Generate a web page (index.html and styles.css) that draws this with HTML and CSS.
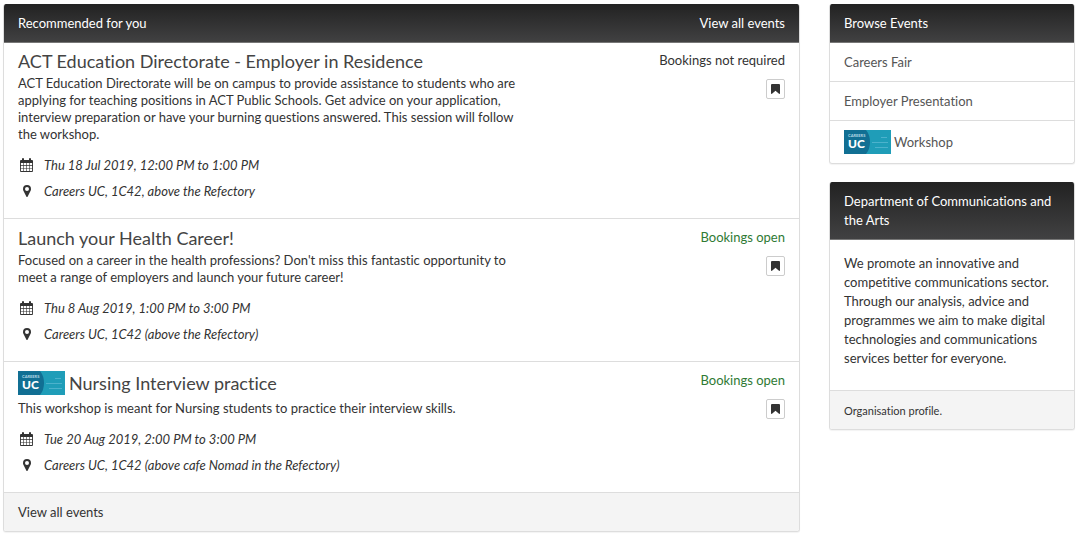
FILE: index.html
```html
<!DOCTYPE html>
<html lang="en">
<head>
<meta charset="utf-8">
<meta name="viewport" content="width=device-width, initial-scale=1">
<title>Events</title>
<link rel="stylesheet" href="styles.css">
</head>
<body class="page">
<svg class="sprite" aria-hidden="true">
  <symbol id="calendar" viewBox="0 0 13 14">
    <path fill="currentColor" fill-rule="evenodd" d="M1 2h1V1q0-1 1-1t1 1v1h5V1q0-1 1-1t1 1v1h1q1 0 1 1v10q0 1-1 1H1q-1 0-1-1V3q0-1 1-1zM.9 5v2.300h2.300V5zm2.900 0v2.300h2.400V5zm3 0v2.300h2.400V5zm3 0v2.300h2.300V5zM.9 7.900v2.300h2.300V7.900zm2.900 0v2.300h2.400V7.900zm3 0v2.300h2.400V7.900zm3 0v2.300h2.300V7.900zM.9 10.800v2.300h2.300v-2.300zm2.900 0v2.300h2.400v-2.300zm3 0v2.300h2.400v-2.300zm3 0v2.300h2.300v-2.300z"/>
  </symbol>
  <symbol id="pin" viewBox="0 0 8 12">
    <path fill="currentColor" fill-rule="evenodd" d="M4 0a4 4 0 0 1 4 4c0 .7-.1 1.200-.4 1.700L4.700 11.500q-.7 1-1.400 0L.4 5.700C.1 5.200 0 4.700 0 4a4 4 0 0 1 4-4zm0 2a2 2 0 1 0 0 4 2 2 0 0 0 0-4z"/>
  </symbol>
  <symbol id="bookmark" viewBox="0 0 9 10">
    <path fill="currentColor" d="M1 0h7q1 0 1 1v8.500q-.3.700-1 .3L4.500 6.800 1 9.800q-.7.400-1-.3V1q0-1 1-1z"/>
  </symbol>
</svg>
<main class="card events">
  <header class="card-head">
    <h2 class="card-title">Recommended for you</h2>
    <a class="link" href="#all">View all events</a>
  </header>
  <article class="event">
    <div class="event-main">
      <h3 class="event-title">ACT Education Directorate - Employer in Residence</h3>
      <p class="event-text">ACT Education Directorate will be on campus to provide assistance to students who are applying for teaching positions in ACT Public Schools. Get advice on your application, interview preparation or have your burning questions answered. This session will follow the workshop.</p>
      <ul class="meta">
        <li class="meta-row"><span class="meta-icon"><svg class="calendar"><use href="#calendar"/></svg></span>Thu 18 Jul 2019, 12:00 PM to 1:00 PM</li>
        <li class="meta-row"><span class="meta-icon"><svg class="pin"><use href="#pin"/></svg></span>Careers UC, 1C42, above the Refectory</li>
      </ul>
    </div>
    <div class="event-side">
      <span class="status">Bookings not required</span>
      <button class="save" type="button" aria-label="Save event"><svg class="bookmark"><use href="#bookmark"/></svg></button>
    </div>
  </article>
  <article class="event">
    <div class="event-main">
      <h3 class="event-title">Launch your Health Career!</h3>
      <p class="event-text">Focused on a career in the health professions? Don't miss this fantastic opportunity to meet a range of employers and launch your future career!</p>
      <ul class="meta">
        <li class="meta-row"><span class="meta-icon"><svg class="calendar"><use href="#calendar"/></svg></span>Thu 8 Aug 2019, 1:00 PM to 3:00 PM</li>
        <li class="meta-row"><span class="meta-icon"><svg class="pin"><use href="#pin"/></svg></span>Careers UC, 1C42 (above the Refectory)</li>
      </ul>
    </div>
    <div class="event-side">
      <span class="status open">Bookings open</span>
      <button class="save" type="button" aria-label="Save event"><svg class="bookmark"><use href="#bookmark"/></svg></button>
    </div>
  </article>
  <article class="event">
    <div class="event-main">
      <h3 class="event-title with-logo">
        <svg class="logo" viewBox="0 0 47 24">
          <path fill="#1f9db8" d="M0 0h47v24H0z"/>
          <path fill="#116f93" d="M0 0h22q4 5 4 12t-4 12H0z"/>
          <path stroke="#4cb2cc" d="M28 12.500h16M37 7.500h6M31 17.500h13"/>
          <text x="4" y="7" fill="#b5d9e5" font-size="4" font-weight="700">CAREERS</text>
          <text x="4" y="18" fill="#fff" font-size="12" font-weight="900">UC</text>
        </svg>
        Nursing Interview practice
      </h3>
      <p class="event-text">This workshop is meant for Nursing students to practice their interview skills.</p>
      <ul class="meta">
        <li class="meta-row"><span class="meta-icon"><svg class="calendar"><use href="#calendar"/></svg></span>Tue 20 Aug 2019, 2:00 PM to 3:00 PM</li>
        <li class="meta-row"><span class="meta-icon"><svg class="pin"><use href="#pin"/></svg></span>Careers UC, 1C42 (above cafe Nomad in the Refectory)</li>
      </ul>
    </div>
    <div class="event-side">
      <span class="status open">Bookings open</span>
      <button class="save" type="button" aria-label="Save event"><svg class="bookmark"><use href="#bookmark"/></svg></button>
    </div>
  </article>
  <footer class="card-foot"><a class="link" href="#all">View all events</a></footer>
</main>
<aside class="sidebar">
  <nav class="card">
    <header class="card-head"><h2 class="card-title">Browse Events</h2></header>
    <a class="category" href="#fair">Careers Fair</a>
    <a class="category" href="#presentation">Employer Presentation</a>
    <a class="category" href="#workshop">
      <svg class="logo" viewBox="0 0 47 24">
        <path fill="#1f9db8" d="M0 0h47v24H0z"/>
        <path fill="#116f93" d="M0 0h22q4 5 4 12t-4 12H0z"/>
        <path stroke="#4cb2cc" d="M28 12.500h16M37 7.500h6M31 17.500h13"/>
        <text x="4" y="7" fill="#b5d9e5" font-size="4" font-weight="700">CAREERS</text>
        <text x="4" y="18" fill="#fff" font-size="12" font-weight="900">UC</text>
      </svg>
      Workshop
    </a>
  </nav>
  <section class="card">
    <header class="card-head"><h2 class="card-title">Department of Communications and the Arts</h2></header>
    <p class="about">We promote an innovative and competitive communications sector. Through our analysis, advice and programmes we aim to make digital technologies and communications services better for everyone.</p>
    <footer class="card-foot"><a class="link small" href="#profile">Organisation profile.</a></footer>
  </section>
</aside>
</body>
</html>
```

FILE: styles.css
```css
* { box-sizing: border-box; }
.page {
  margin: 0;
  padding: 4px 5px 4px 3px;
  display: grid;
  grid-template-columns: minmax(0, 1fr) 246px;
  gap: 29px;
  align-items: start;
  background: #fff;
  color: #333;
  font: 13px/19px Lato, "Liberation Sans", sans-serif;
  font-variant-ligatures: none;
}
.sprite { position: absolute; width: 0; height: 0; }
.card {
  border: 1px solid #ddd;
  border-top: 0;
  border-radius: 3px;
  box-shadow: 0 1px 1px #0000000d;
  overflow: hidden;
}
.card-head {
  display: flex;
  justify-content: space-between;
  gap: 16px;
  margin: 0 -1px;
  padding: 10px 15px 9px;
  background: linear-gradient(#222, #414142);
  border-bottom: 1px solid #777;
  color: #fff;
}
.card-title { margin: 0; font-size: 13px; font-weight: 400; }
.link { color: inherit; text-decoration: none; }
.event {
  display: flex;
  justify-content: space-between;
  gap: 24px;
  padding: 8px 14px 14px;
}
.event + .event { border-top: 1px solid #ddd; padding-top: 9px; }
.event-main { flex: 0 1 506px; }
.event-title {
  margin: 0 0 3px;
  font-size: 18px;
  font-weight: 400;
  line-height: 21px;
  color: #444;
}
.event-title.with-logo {
  display: flex;
  align-items: center;
  gap: 4px;
  margin-bottom: 5px;
}
.logo { flex: none; width: 47px; height: 24px; }
.event-text { margin: 0 0 9px; line-height: 17px; }
.meta { margin: 0; padding: 0; list-style: none; font-style: italic; }
.meta-row { display: flex; align-items: center; gap: 9px; line-height: 26px; }
.meta-icon { display: flex; justify-content: center; width: 17px; }
.calendar { width: 13px; height: 14px; }
.pin { width: 8px; height: 12px; }
.event-side {
  display: flex;
  flex: none;
  flex-direction: column;
  align-items: flex-end;
  gap: 9px;
}
.open { color: #2f7a34; }
.save {
  display: grid;
  place-items: center;
  width: 19px;
  height: 20px;
  padding: 0;
  border: 1px solid #ccc;
  border-radius: 2px;
  background: #fff;
  color: #333;
}
.bookmark { width: 9px; height: 10px; }
.card-foot {
  padding: 10px 14px 9px;
  background: #f4f4f4;
  border-top: 1px solid #ddd;
}
.small { font-size: 11px; }
.sidebar { display: grid; gap: 18px; }
.category {
  display: flex;
  align-items: center;
  gap: 3px;
  min-height: 38px;
  padding: 9px 14px;
  color: #555;
  text-decoration: none;
}
.category + .category { min-height: 39px; border-top: 1px solid #ddd; }
.about { margin: 0; padding: 14px 14px 22px; }
```
